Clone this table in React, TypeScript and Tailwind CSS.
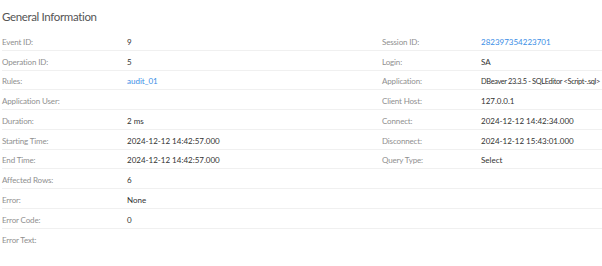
import React from "react";

type Field = { label: string; value?: string; link?: boolean; tight?: boolean };

const left: Field[] = [
  { label: "Event ID:", value: "9" },
  { label: "Operation ID:", value: "5" },
  { label: "Rules:", value: "audit_01", link: true },
  { label: "Application User:", value: "" },
  { label: "Duration:", value: "2 ms" },
  { label: "Starting Time:", value: "2024-12-12 14:42:57.000" },
  { label: "End Time:", value: "2024-12-12 14:42:57.000" },
  { label: "Affected Rows:", value: "6" },
  { label: "Error:", value: "None" },
  { label: "Error Code:", value: "0" },
  { label: "Error Text:", value: "" },
];

const right: Field[] = [
  { label: "Session ID:", value: "282397354223701", link: true },
  { label: "Login:", value: "SA" },
  { label: "Application:", value: "DBeaver 23.3.5 - SQLEditor <Script-.sql>", tight: true },
  { label: "Client Host:", value: "127.0.0.1" },
  { label: "Connect:", value: "2024-12-12 14:42:34.000" },
  { label: "Disconnect:", value: "2024-12-12 15:43:01.000" },
  { label: "Query Type:", value: "Select" },
];

const Value: React.FC<{ f?: Field }> = ({ f }) => (
  <span
    className={`${f?.link ? "text-[#3a8ee6]" : "text-[#333]"} ${
      f?.tight ? "text-[7.4px] tracking-[-0.35px]" : ""
    }`}>
    {f?.value}
  </span>
);

export default function App() {
  return (
    <div
      className="w-[602px] h-[266px] bg-white pl-[2px] overflow-hidden"
      style={{ fontFamily: "Lato, 'Noto Sans', sans-serif" }}>
      <h2 className="pt-[10px] h-[31px] text-[11.5px] leading-[14px] tracking-[-0.35px] text-[#555]">
        General Information
      </h2>
      <div className="flex flex-col">
        {left.map((l, i) => {
          const r = right[i];
          return (
            <div
              key={l.label}
              className={`h-[19.75px] grid grid-cols-[125px_255px_99px_1fr] items-center pt-[3px] text-[8px] whitespace-nowrap ${
                i < left.length - 1 ? "border-b border-[#f0f0f0]" : ""
              }`}>
              <span className="text-[#8f8f8f] tracking-[-0.15px]">{l.label}</span>
              <Value f={l} />
              <span className="text-[#8f8f8f] tracking-[-0.15px]">{r?.label}</span>
              <Value f={r} />
            </div>
          );
        })}
      </div>
    </div>
  );
}
